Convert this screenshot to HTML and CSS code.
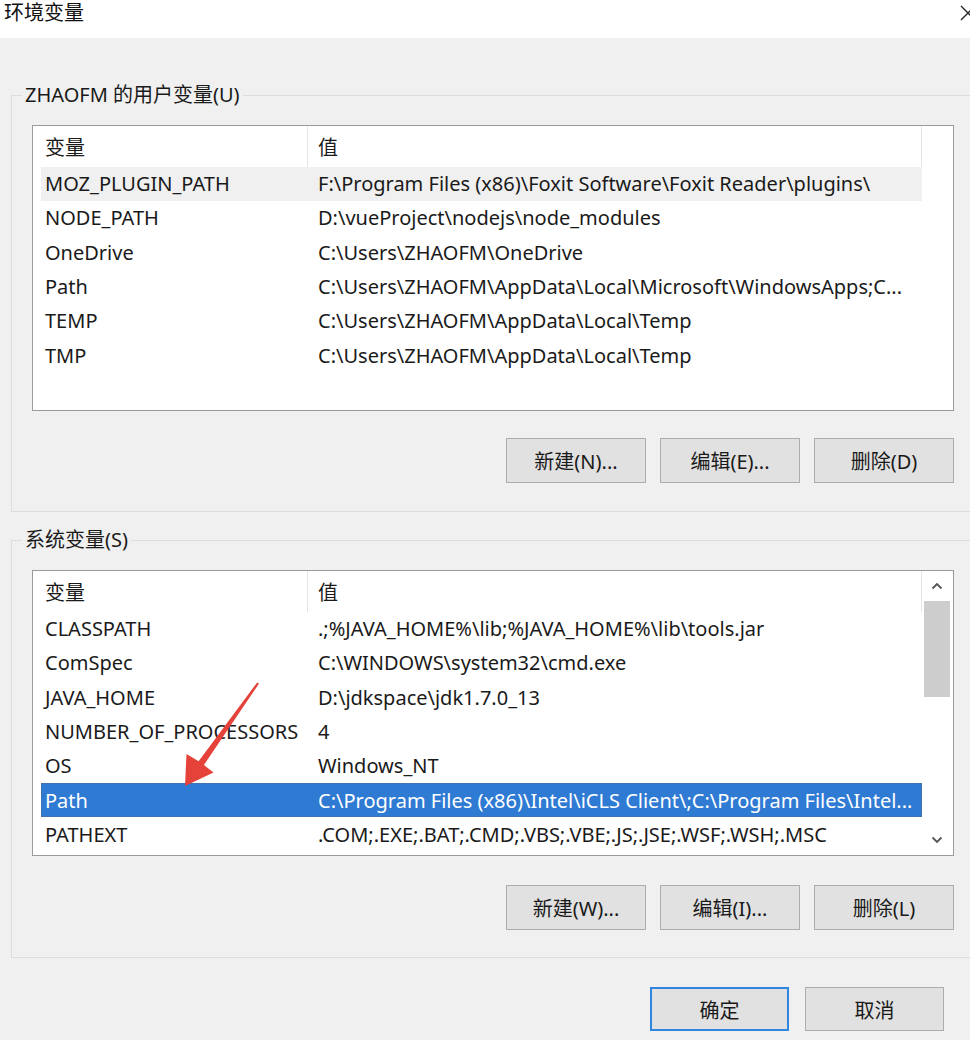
FILE: index.html
```html
<!DOCTYPE html>
<html lang="zh-CN">
<head>
<meta charset="utf-8">
<title>环境变量</title>
<link rel="stylesheet" href="styles.css">
</head>
<body>
<div class="window">
  <div class="titlebar">
    <span class="title">环境变量</span>
    <svg class="close" width="16" height="16" viewBox="0 0 16 16"><path d="M1 1 L15 15 M15 1 L1 15" stroke="#222" stroke-width="1.3" fill="none"/></svg>
  </div>
  <div class="main">
    <fieldset class="group group-user">
      <legend>ZHAOFM 的用户变量(U)</legend>
      <div class="group-inner">
        <div class="listbox">
          <div class="table">
            <div class="row head"><div class="c1">变量</div><div class="c2">值</div></div>
            <div class="row hover"><div class="c1">MOZ_PLUGIN_PATH</div><div class="c2">F:\Program Files (x86)\Foxit Software\Foxit Reader\plugins\</div></div>
            <div class="row"><div class="c1">NODE_PATH</div><div class="c2">D:\vueProject\nodejs\node_modules</div></div>
            <div class="row"><div class="c1">OneDrive</div><div class="c2">C:\Users\ZHAOFM\OneDrive</div></div>
            <div class="row"><div class="c1">Path</div><div class="c2">C:\Users\ZHAOFM\AppData\Local\Microsoft\WindowsApps;C...</div></div>
            <div class="row"><div class="c1">TEMP</div><div class="c2">C:\Users\ZHAOFM\AppData\Local\Temp</div></div>
            <div class="row"><div class="c1">TMP</div><div class="c2">C:\Users\ZHAOFM\AppData\Local\Temp</div></div>
          </div>
          <div class="noscroll"></div>
        </div>
        <div class="btnrow">
          <button class="btn">新建(N)...</button>
          <button class="btn">编辑(E)...</button>
          <button class="btn">删除(D)</button>
        </div>
      </div>
    </fieldset>
    <fieldset class="group group-sys">
      <legend>系统变量(S)</legend>
      <div class="group-inner sys-inner">
        <div class="listbox">
          <div class="table">
            <div class="row head"><div class="c1">变量</div><div class="c2">值</div></div>
            <div class="row"><div class="c1">CLASSPATH</div><div class="c2">.;%JAVA_HOME%\lib;%JAVA_HOME%\lib\tools.jar</div></div>
            <div class="row"><div class="c1">ComSpec</div><div class="c2">C:\WINDOWS\system32\cmd.exe</div></div>
            <div class="row"><div class="c1">JAVA_HOME</div><div class="c2">D:\jdkspace\jdk1.7.0_13</div></div>
            <div class="row"><div class="c1">NUMBER_OF_PROCESSORS</div><div class="c2">4</div></div>
            <div class="row"><div class="c1">OS</div><div class="c2">Windows_NT</div></div>
            <div class="row selected"><div class="c1">Path</div><div class="c2">C:\Program Files (x86)\Intel\iCLS Client\;C:\Program Files\Intel...</div></div>
            <div class="row"><div class="c1">PATHEXT</div><div class="c2">.COM;.EXE;.BAT;.CMD;.VBS;.VBE;.JS;.JSE;.WSF;.WSH;.MSC</div></div>
          </div>
          <div class="scrollbar">
            <div class="sb-btn"><svg width="12" height="8" viewBox="0 0 12 8"><path d="M1.5 6.5 L6 2 L10.5 6.5" stroke="#555" stroke-width="1.8" fill="none"/></svg></div>
            <div class="sb-thumb"></div>
            <div class="sb-track"></div>
            <div class="sb-btn"><svg width="12" height="8" viewBox="0 0 12 8"><path d="M1.5 1.5 L6 6 L10.5 1.5" stroke="#555" stroke-width="1.8" fill="none"/></svg></div>
          </div>
        </div>
        <div class="btnrow">
          <button class="btn">新建(W)...</button>
          <button class="btn">编辑(I)...</button>
          <button class="btn">删除(L)</button>
        </div>
      </div>
    </fieldset>
    <div class="footer">
      <button class="btn btn-default">确定</button>
      <button class="btn">取消</button>
    </div>
  </div>
  <svg class="arrow" width="970" height="1040" viewBox="0 0 970 1040">
    <polygon points="257.2,682.4 198.6,761.2 186.5,754 185,786 213.5,772.5 203.9,765 259,683.6" fill="#e5423a"/>
  </svg>
</div>
</body>
</html>
```

FILE: styles.css
```css
html, body {
  margin: 0;
  padding: 0;
}
body {
  width: 970px;
  height: 1040px;
  overflow: hidden;
  background: #f0f0f0;
  font-family: "Noto Sans", "Noto Sans CJK SC", sans-serif;
  font-size: 20px;
  color: #1a1a1a;
}
.window {
  position: relative;
  width: 970px;
  height: 1040px;
  overflow: hidden;
}
.titlebar {
  height: 38px;
  background: #ffffff;
  display: flex;
  justify-content: space-between;
  align-items: flex-start;
  padding-left: 4px;
}
.title {
  font-size: 20px;
  line-height: 26px;
  color: #111;
}
.close {
  margin-top: 5px;
  margin-right: -6px;
}
.main {
  padding-left: 11px;
}
.group {
  margin: 0;
  padding: 0;
  border: 1px solid #dcdcdc;
  width: 973px;
  box-sizing: border-box;
  min-width: 0;
}
.group-user {
  margin-top: 45px;
}
.group-sys {
  margin-top: 16px;
}
.group legend {
  margin-left: 10px;
  padding: 0 3px;
  line-height: 24px;
  font-size: 20px;
}
.group-inner {
  padding: 18px 0 28px 20px;
}
.sys-inner {
  padding: 18px 0 27px 20px;
}
.sys-inner .btnrow {
  margin-top: 29px;
}
.listbox {
  width: 922px;
  height: 286px;
  box-sizing: border-box;
  border: 1px solid #9a9a9a;
  background: #fff;
  display: flex;
  padding-left: 8px;
}
.table {
  width: 881px;
  flex: none;
}
.row {
  display: grid;
  grid-template-columns: 267px 614px;
  height: 34.3px;
  align-items: center;
  white-space: nowrap;
  box-sizing: border-box;
}
.row .c1 {
  padding-left: 4px;
  overflow: hidden;
}
.row .c2 {
  padding-left: 10px;
  overflow: hidden;
}
.row.head {
  height: 40.5px;
  align-items: stretch;
}
.row.head .c1, .row.head .c2 {
  display: flex;
  align-items: center;
  border-right: 1px solid #e5e5e5;
}
.row.hover {
  background: #f0f0f0;
}
.row.selected {
  background: #2f7ad3;
  color: #fff;
  outline: 1px dotted #556b8a;
  outline-offset: -1px;
}
.noscroll {
  flex: 1;
}
.scrollbar {
  flex: 1;
  display: flex;
  flex-direction: column;
  padding: 0 3px 0 2px;
}
.sb-btn {
  height: 30px;
  display: flex;
  align-items: center;
  justify-content: center;
  flex: none;
}
.sb-thumb {
  height: 96px;
  background: #cdcdcd;
  flex: none;
}
.sb-track {
  flex: 1;
}
.btnrow {
  width: 922px;
  display: flex;
  justify-content: flex-end;
  gap: 14px;
  margin-top: 27px;
}
.btn {
  width: 140px;
  height: 45px;
  background: #e1e1e1;
  border: 1px solid #adadad;
  font-family: "Noto Sans", "Noto Sans CJK SC", sans-serif;
  font-size: 20px;
  color: #1a1a1a;
  padding: 0;
  box-sizing: border-box;
}
.footer {
  display: flex;
  justify-content: flex-end;
  gap: 16px;
  margin-top: 29px;
  padding-right: 26px;
}
.footer .btn {
  width: 139px;
  height: 44px;
}
.btn-default {
  border: 2px solid #2f86dc;
}
.arrow {
  position: absolute;
  left: 0;
  top: 0;
  pointer-events: none;
}
```
